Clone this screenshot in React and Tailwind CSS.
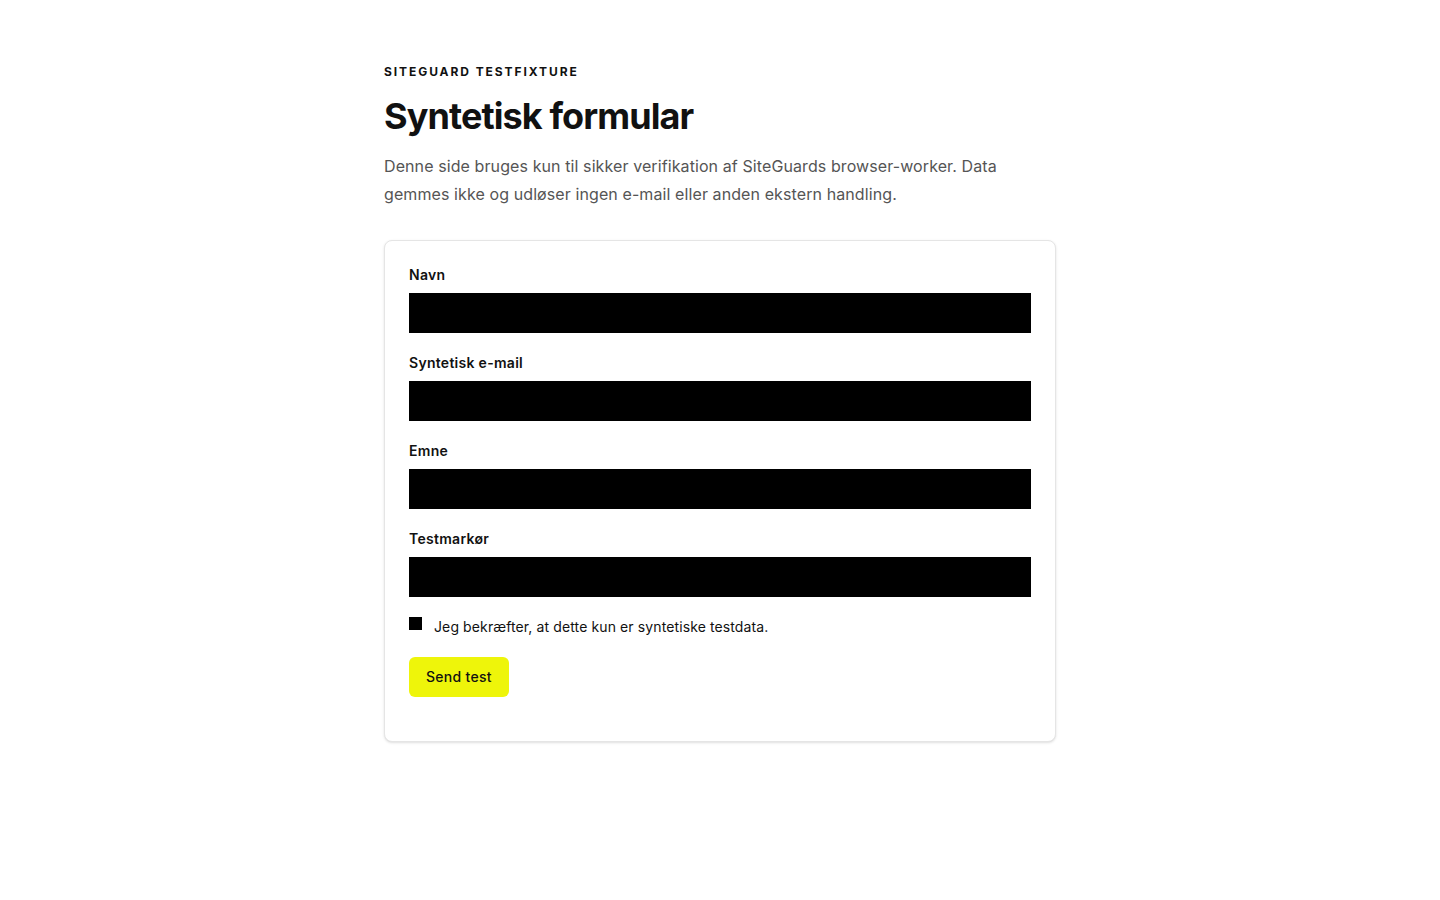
const fields = [
  { id: "name", label: "Navn" },
  { id: "email", label: "Syntetisk e-mail" },
  { id: "subject", label: "Emne" },
  { id: "marker", label: "Testmarkør" }
];

export default function App() {
  return (
    <div className="min-h-screen bg-white text-[#111] font-['Inter',sans-serif]">
      <main className="mx-auto max-w-[672px] pt-16 pb-16">
        <p className="text-xs leading-4 font-bold uppercase tracking-[0.16em]">SiteGuard testfixture</p>
        <h1 className="mt-4 text-4xl leading-10 font-bold tracking-tight">Syntetisk formular</h1>
        <p className="mt-4 text-base leading-7 tracking-[0.006em] text-[#555]">
          Denne side bruges kun til sikker verifikation af SiteGuards browser-worker. Data gemmes ikke og udløser ingen e-mail eller anden ekstern handling.
        </p>

        <form
          className="mt-8 rounded-lg border border-[#e5e5e5] bg-white p-6 pb-11 shadow-sm"
          onSubmit={(e) => e.preventDefault()}
        >
          <div className="flex flex-col gap-5">
            {fields.map((f) => (
              <div key={f.id}>
                <label htmlFor={f.id} className="block text-sm leading-5 font-semibold tracking-[0.02em]">
                  {f.label}
                </label>
                <input id={f.id} type="text" className="mt-2 block h-10 w-full bg-black outline-none" />
              </div>
            ))}

            <label className="flex items-start gap-3 text-sm leading-5 tracking-[0.008em]">
              <input type="checkbox" className="appearance-none mt-0 h-[13px] w-[13px] shrink-0 bg-black" />
              <span>Jeg bekræfter, at dette kun er syntetiske testdata.</span>
            </label>

            <div>
              <button
                type="submit"
                className="h-10 rounded-md bg-[#eef50a] px-[17px] text-sm font-medium tracking-[0.02em] text-[#111]"
              >
                Send test
              </button>
            </div>
          </div>
        </form>
      </main>
    </div>
  );
}
